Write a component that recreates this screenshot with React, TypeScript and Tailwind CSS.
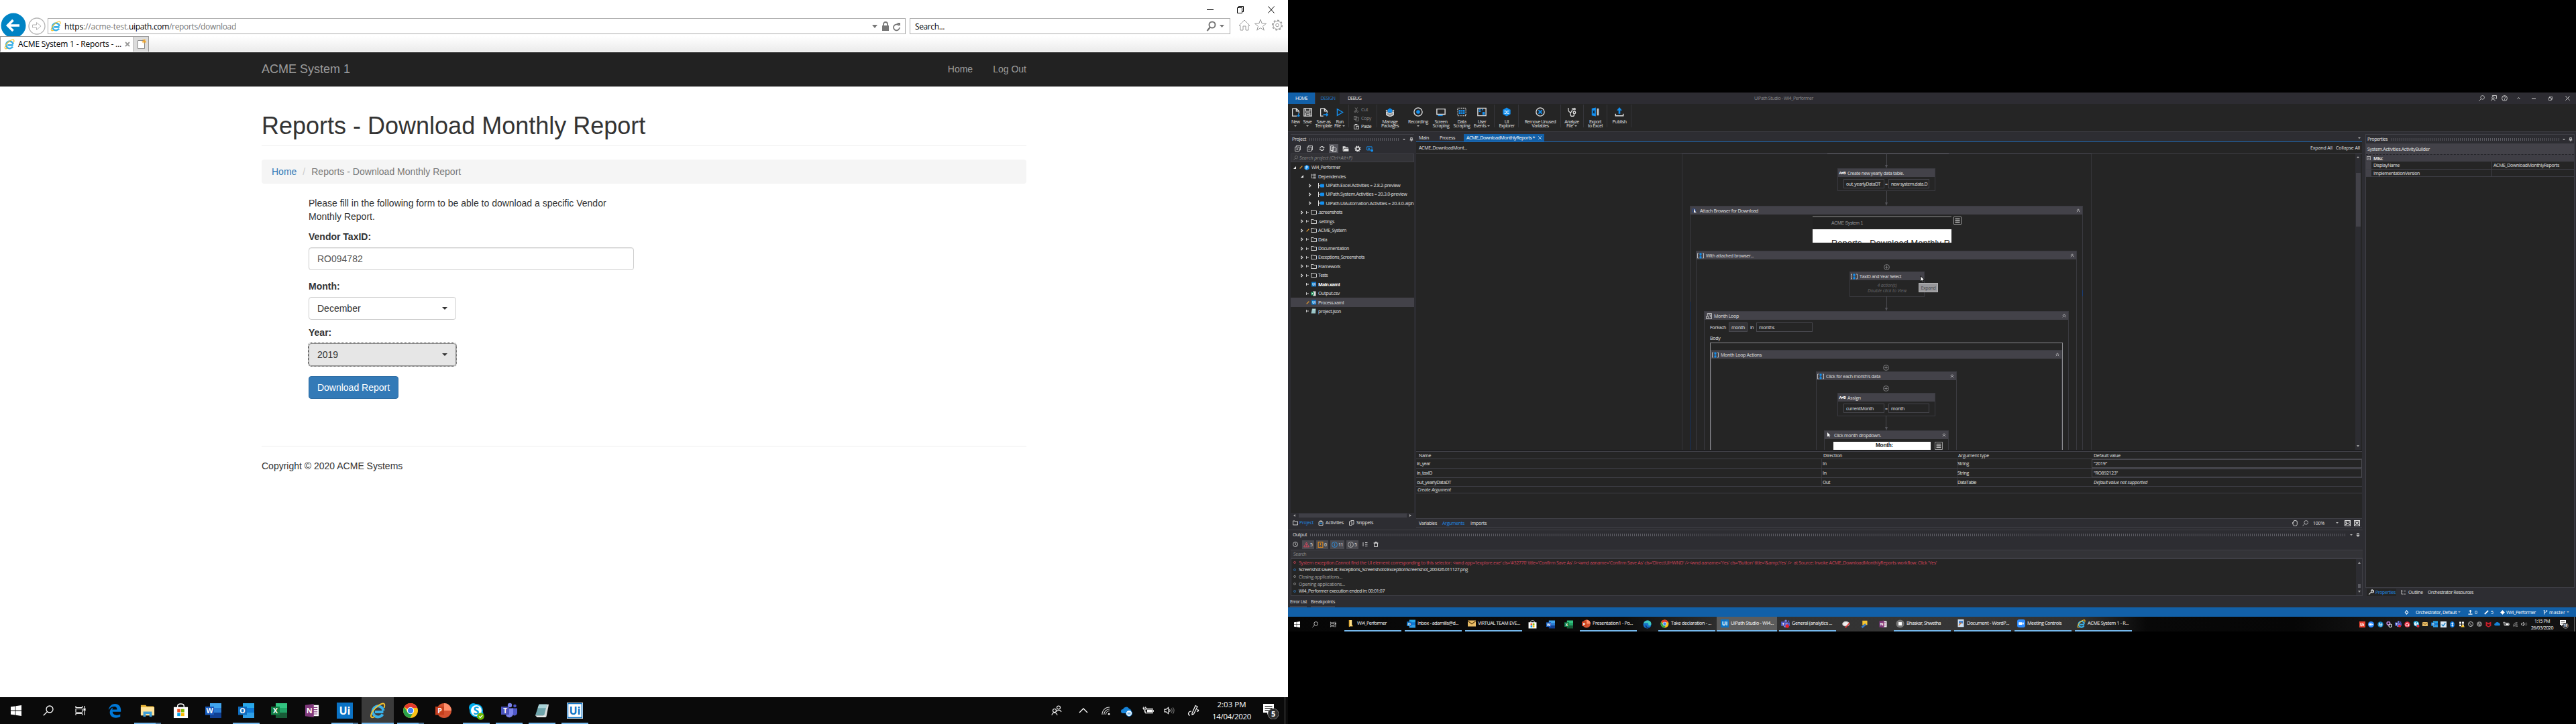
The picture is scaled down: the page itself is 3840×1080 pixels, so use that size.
import { useLayoutEffect, useRef, useState, type ReactNode } from "react";
import clsx from "clsx";

/* ---------- shared text helper: spreads a label over a known width ---------- */
function T({ w, children, className }: { w: number; children: string; className?: string }) {
  const ref = useRef<HTMLSpanElement>(null);
  const [spacing, setSpacing] = useState(0);
  useLayoutEffect(() => {
    if (ref.current) {
      const natural = ref.current.getBoundingClientRect().width;
      setSpacing((w - natural) / children.length);
    }
  }, [w, children]);
  return (
    <span className={clsx("block shrink-0 whitespace-pre", className)} style={{ width: w, letterSpacing: spacing }}>
      <span ref={ref}>{children}</span>
    </span>
  );
}

/* ---------- application icons ---------- */
type IconProps = { className?: string };

const WinLogo = ({ className }: IconProps) => (
  <svg viewBox="0 0 16 16" className={className} fill="#fff">
    <path d="M0 2.3 6.6 1.4V7.6H0zM7.4 1.3 16 0v7.6H7.4zM0 8.4h6.6v6.2L0 13.7zM7.4 8.4H16V16l-8.6-1.3z" />
  </svg>
);
const Magnifier = ({ className }: IconProps) => (
  <svg viewBox="0 0 16 16" className={className} fill="none" stroke="currentColor" strokeWidth="1.3">
    <circle cx="10" cy="6" r="5" />
    <path d="M6.4 9.6.8 15.3" />
  </svg>
);
const TaskView = ({ className }: IconProps) => (
  <svg viewBox="0 0 16 16" className={className} fill="none" stroke="#fff" strokeWidth="1.1">
    <path d="M1 1v2.5h9.5V1M1 15v-2.5h9.5V15M1 5.5h9.5v5H1zM14 1v3M14 9v6" />
    <path d="M13 5h2v2.6h-2z" fill="#fff" />
  </svg>
);
const EdgeOld = ({ className }: IconProps) => (
  <svg viewBox="0 0 24 24" className={className}>
    <path fill="#0078d7" d="M2 11C3 4.500 7.500 1 12.500 1 19 1 22 6 22 11v3H8.500c.3 4.200 4 5.500 7 5.500 2.200 0 4-.6 5.500-1.500v4.200c-2 1-4.300 1.500-7 1.500-6 0-10-3.500-10-9 0-3.500 2-6.700 5.500-8-1 1.200-1.300 2.500-1.400 3.700h7.700c0-3-1.300-5-4.600-5C7.500 5.400 4 7.500 2 11z" />
  </svg>
);
const EdgeNew = ({ className }: IconProps) => (
  <svg viewBox="0 0 24 24" className={className}>
    <circle cx="12" cy="12" r="11" fill="#1672c9" />
    <path fill="#3fc8c0" d="M2 9C4 3 9 1 13 1c6 0 10 4 10 9 0 3-2 5-5 5-2 0-3-1-3-2 1-1 1-5-4-5-4 0-8 1-9 1z" />
    <path fill="#0b3f7d" d="M9 12c0 5 4 8 8 8 2 0 4-1 4-1-2 3-6 4-9 4-4-1-7-7-3-11z" />
  </svg>
);
const Folder = ({ className }: IconProps) => (
  <svg viewBox="0 0 24 24" className={className}>
    <path fill="#e9b63a" d="M1 3h8l1.500 2H22v14H1z" />
    <path fill="#ffe49b" d="M1 6.500h22V20H1z" />
    <path fill="#3f9fd9" d="M5 22v-8.500h14V22h-4v-4.500H9V22z" />
  </svg>
);
const PlainFolder = ({ className }: IconProps) => (
  <svg viewBox="0 0 12 16" className={className}>
    <path fill="#ffe08a" d="M1 0h7v15H1z" />
    <path fill="#e0a92e" d="M1 0h2v16H1zM8 11h2v4H8z" />
  </svg>
);
const Store = ({ className }: IconProps) => (
  <svg viewBox="0 0 24 24" className={className}>
    <path d="M7 8V4.500C7 2.500 9 1 12 1s5 1.500 5 3.500V8" fill="none" stroke="#fff" strokeWidth="1.500" />
    <path fill="#fff" d="M1 6h22v17H1z" />
    <path fill="#f25022" d="M6.500 9h5v5h-5z" />
    <path fill="#7fba00" d="M12.500 9h5v5h-5z" />
    <path fill="#00a4ef" d="M6.500 15h5v5h-5z" />
    <path fill="#ffb900" d="M12.500 15h5v5h-5z" />
  </svg>
);
function Office({ className, letter, tones }: IconProps & { letter: string; tones: [string, string, string, string] }) {
  return (
    <svg viewBox="0 0 24 24" className={className}>
      <path fill={tones[0]} d="M7 1h17v8H7z" />
      <path fill={tones[1]} d="M7 8h17v8H7z" />
      <path fill={tones[2]} d="M7 15h17v8H7z" />
      <path fill={tones[3]} d="M0 6h13v12.500H0z" />
      <text x="6.500" y="16" textAnchor="middle" fontSize="10.500" fontWeight="700" fill="#fff" fontFamily="Open Sans, sans-serif">
        {letter}
      </text>
    </svg>
  );
}
const Word = (p: IconProps) => <Office {...p} letter="W" tones={["#41a5ee", "#2b7cd3", "#103f91", "#185abd"]} />;
const Excel = (p: IconProps) => <Office {...p} letter="X" tones={["#33c481", "#21a366", "#185c37", "#107c41"]} />;
const Outlook = (p: IconProps) => <Office {...p} letter="O" tones={["#28a8ea", "#0f78d4", "#2f9fe8", "#0f6cbd"]} />;
const PowerPoint = ({ className }: IconProps) => (
  <svg viewBox="0 0 24 24" className={className}>
    <circle cx="13" cy="12" r="11" fill="#d35230" />
    <path d="M13 1a11 11 0 0 1 11 11H13z" fill="#ff8f6b" />
    <path fill="#c43e1c" d="M0 6h13v12.500H0z" />
    <text x="6.500" y="16" textAnchor="middle" fontSize="10.500" fontWeight="700" fill="#fff" fontFamily="Open Sans, sans-serif">P</text>
  </svg>
);
const OneNote = ({ className }: IconProps) => (
  <svg viewBox="0 0 24 24" className={className}>
    <path fill="#fff" d="M12 3h11v18H12z" />
    <path d="M14 7h7M14 10.500h7M14 14h7M14 17.500h7" stroke="#80397b" strokeWidth="1.200" />
    <path fill="#80397b" d="M1 3 15 1v22L1 21z" />
    <text x="8" y="16.500" textAnchor="middle" fontSize="12" fontWeight="700" fill="#fff" fontFamily="Open Sans, sans-serif">N</text>
  </svg>
);
function UiTile({ className, inverse }: IconProps & { inverse?: boolean }) {
  return (
    <svg viewBox="0 0 24 24" className={className}>
      <path fill={inverse ? "#fff" : "#0b72c4"} d="M0 0h24v24H0z" />
      {inverse && <path d="M1.500 1.500h21v21h-21z" fill="none" stroke="#0b72c4" strokeWidth="1.500" />}
      <text x="12" y="18" textAnchor="middle" fontSize="16" fontWeight="700" fill={inverse ? "#0b72c4" : "#fff"} fontFamily="Open Sans, sans-serif">Ui</text>
    </svg>
  );
}
const InternetExplorer = ({ className }: IconProps) => (
  <svg viewBox="0 0 24 24" className={className}>
    <path d="M20.500 14H8M19.500 17.500A8 8 0 1 1 20.500 12" fill="none" stroke="#39b0e8" strokeWidth="4" />
    <path d="M21.500 8c1.500-4 1-7-2-6.500C14 2.500 3.500 11 2 19c-.6 3.500 2 4 5.500 2" fill="none" stroke="#f6c32c" strokeWidth="1.900" />
  </svg>
);
const Chrome = ({ className }: IconProps) => (
  <svg viewBox="0 0 24 24" className={className}>
    <circle cx="12" cy="12" r="11" fill="#fbc116" />
    <path d="M12 12 2.500 6.500A11 11 0 0 1 21.500 6.500L22 8H12z" fill="#e33b2e" />
    <path d="M2.500 6.500A11 11 0 0 0 11.500 23L16 14.500 12 17 7.500 14.500z" fill="#2ba24c" />
    <circle cx="12" cy="12" r="5.200" fill="#fff" />
    <circle cx="12" cy="12" r="4.200" fill="#4285f4" />
  </svg>
);
function Skype({ className, busy }: IconProps & { busy?: boolean }) {
  return (
    <svg viewBox="0 0 24 26" className={className}>
      <circle cx="7.500" cy="7.500" r="6.500" fill="#00aff0" />
      <circle cx="16" cy="17" r="6.500" fill="#00aff0" />
      <circle cx="12" cy="12" r="10" fill="#00aff0" />
      <circle cx="12" cy="12" r="8" fill="#fff" />
      <text x="12" y="18" textAnchor="middle" fontSize="16" fontWeight="700" fill="#0a9fe0" fontFamily="Open Sans, sans-serif">S</text>
      <circle cx="18.500" cy="20.500" r="5.300" fill={busy ? "#d92c3a" : "#6bb700"} />
      {!busy && <path d="m16 20.500 2 2 3.200-3.600" fill="none" stroke="#fff" strokeWidth="1.400" />}
    </svg>
  );
}
function Teams({ className, busy }: IconProps & { busy?: boolean }) {
  return (
    <svg viewBox="0 0 24 24" className={className}>
      <circle cx="13" cy="4" r="3.200" fill="#7b83eb" />
      <circle cx="20.500" cy="5" r="2.300" fill="#5059c9" />
      <path fill="#5059c9" d="M17 8.500h7V16a4 4 0 0 1-7 2z" />
      <path fill="#7b83eb" d="M7.500 8.500H18V17a6 6 0 0 1-10.500 3z" />
      <path fill="#4b53bc" d="M0 6h12v12H0z" />
      <text x="6" y="15.800" textAnchor="middle" fontSize="10.500" fontWeight="700" fill="#fff" fontFamily="Open Sans, sans-serif">T</text>
      {busy && <circle cx="17" cy="18.500" r="5" fill="#e0212c" />}
    </svg>
  );
}
const Notepad = ({ className }: IconProps) => (
  <svg viewBox="0 0 24 24" className={className}>
    <path fill="#d7dcdc" d="M8 2h15l-4 20-4 1z" />
    <path fill="#6fa4ab" d="M7 2h13l-4.500 18H1z" />
    <path fill="#a9d3d8" d="M7 2h13l-1.500 6H5z" />
    <path fill="#e9eeee" d="M1 20h15.500l2 3H4z" />
  </svg>
);
const Envelope = ({ className }: IconProps) => (
  <svg viewBox="0 0 16 16" className={className}>
    <path fill="#e8bc66" d="M0 2h16v12H0z" />
    <path d="m0 3 8 6 8-6" fill="none" stroke="#5a3d12" strokeWidth="1.400" />
  </svg>
);
const ZoomApp = ({ className }: IconProps) => (
  <svg viewBox="0 0 16 16" className={className}>
    <rect width="16" height="16" rx="4" fill="#2d8cff" />
    <path fill="#fff" d="M3 5.500h7v5H3zM10.500 7.500 13 5.800v4.400l-2.500-1.700z" />
  </svg>
);
const Wifi = ({ className }: IconProps) => (
  <svg viewBox="0 0 14 14" className={className} fill="none" stroke="#ddd" strokeWidth="1.100">
    <path d="M1 13C1 6 6 1 13 1M4 13c0-5 4-9 9-9M7 13c0-3.500 2.500-6 6-6" />
    <circle cx="12" cy="12" r="1.500" fill="#fff" stroke="none" />
  </svg>
);
const Cloud = ({ className }: IconProps) => (
  <svg viewBox="0 0 17 14" className={className}>
    <path fill="#1683d8" d="M3 11a3 3 0 0 1 0-6 5 5 0 0 1 9-1 4 4 0 0 1 2 7z" />
  </svg>
);
const Battery = ({ className }: IconProps) => (
  <svg viewBox="0 0 18 14" className={className} fill="none" stroke="#fff" strokeWidth="1.100">
    <path d="M6 4h10v7H5V8M17.200 6v3M2 1v2M5 1v2M1 3h5v2L4 6.500 2 5zM3.500 7v3" />
    <path d="M8 6h6.500v3H8z" fill="#fff" />
  </svg>
);
const Speaker = ({ className }: IconProps) => (
  <svg viewBox="0 0 18 14" className={className} fill="none" stroke="#fff" strokeWidth="1.100">
    <path d="M1 5h2.500L7 2v10L3.500 9H1zM9 5q1.500 2 0 4" />
    <path d="M11.500 3.500q3 3.500 0 7M14 2q4 5 0 10" stroke="#777" />
  </svg>
);

/* ---------- left monitor: browser ---------- */
function TitleBar() {
  return (
    <div className="flex h-[27px] items-center justify-end pr-[19px]">
      <svg viewBox="0 0 110 12" className="h-3 w-[110px]" fill="none" stroke="#000" strokeWidth="1">
        <path d="M8 6.500h10M53.500 3.500h7v8h-7zM55.500 3.500v-2h7v8h-2M99.500 1.500l9 10M108.500 1.500l-9 10" />
      </svg>
    </div>
  );
}

function AddressRow() {
  return (
    <div className="flex h-[27px] items-start font-['Open_Sans',sans-serif] text-xs">
      <div className="relative h-[27px] w-[71px] shrink-0">
        <svg viewBox="0 0 71 35" className="absolute -top-2 left-0 h-[35px] w-[71px]">
          <circle cx="20" cy="19" r="18.500" fill="#0083c4" />
          <path d="M29 19H12M19.500 11l-8 8 8 8" fill="none" stroke="#fff" strokeWidth="3.600" />
          <circle cx="55" cy="20" r="12" fill="#fff" stroke="#b4b4b4" strokeWidth="1.300" />
          <path d="M48.500 18h6v-3.500l6.500 5.500-6.500 5.500V22h-6z" fill="none" stroke="#b4b4b4" />
        </svg>
      </div>
      <div className="flex h-6 w-[1279px] shrink-0 items-center border border-[#ababab] pl-[3px] pr-1.5">
        <InternetExplorer className="size-4" />
        <span className="ml-[5px] flex pt-0.5 text-[#777]">
          <T w={28} className="text-black">https</T>
          <T w={68}>://acme-test.</T>
          <T w={60} className="text-black">uipath.com</T>
          <T w={100}>/reports/download</T>
        </span>
        <svg viewBox="0 0 46 16" className="ml-auto h-4 w-[46px]" fill="#777">
          <path d="M3 6h8l-4 5zM18 7h10v8H18z" />
          <path d="M20 8V5a3 3 0 0 1 6 0v3" fill="none" stroke="#777" strokeWidth="1.800" />
          <path d="M43 7a4.500 4.500 0 1 0 1 3" fill="none" stroke="#777" strokeWidth="1.800" />
          <path d="M39.500 3H45v5z" />
        </svg>
      </div>
      <div className="ml-1.5 flex h-6 w-[478px] shrink-0 items-center border border-[#ababab] px-[7px]">
        <T w={44} className="pt-0.5 text-black">Search...</T>
        <svg viewBox="0 0 28 16" className="ml-auto h-4 w-7" fill="none" stroke="#777">
          <circle cx="9" cy="6" r="4.500" strokeWidth="2" />
          <path d="M6 9.500 1.500 15" strokeWidth="2.300" />
          <path d="M20 6h7l-3.500 4z" fill="#777" stroke="none" />
        </svg>
      </div>
      <svg viewBox="0 0 68 20" className="ml-3 h-5 w-[68px]" fill="none" stroke="#9b9b9b" strokeWidth="1">
        <path d="M1 11 9 3l8 8h-2v7h-4v-6H7v6H3v-7z" />
        <path d="m33 2 2.200 6 6.300.2-5 4 1.800 6-5.300-3.600-5.300 3.600 1.800-6-5-4 6.300-.2z" />
        <circle cx="58" cy="10.500" r="6" />
        <circle cx="58" cy="10.500" r="7.300" strokeWidth="1.600" strokeDasharray="2.900 2.800" />
        <circle cx="58" cy="10.500" r="2.300" />
      </svg>
    </div>
  );
}

function TabStrip() {
  return (
    <div className="flex h-6 border-b border-white bg-gradient-to-b from-white to-[#ebebeb] font-['Open_Sans',sans-serif] text-xs">
      <div className="flex h-[23px] w-[200px] items-center border border-b-0 border-[#999] bg-white pl-[5px]">
        <InternetExplorer className="size-4" />
        <T w={154} className="ml-[5px] text-black">ACME System 1 - Reports - ...</T>
        <svg viewBox="0 0 8 8" className="ml-[5px] size-2" stroke="#999" strokeWidth="1.800">
          <path d="m1 1 6 6M7 1 1 7" />
        </svg>
      </div>
      <div className="flex h-[23px] w-[22px] items-center justify-center border border-b-0 border-l-0 border-[#999] bg-[#dcdcdc]">
        <svg viewBox="0 0 14 16" className="h-4 w-3.5">
          <path d="M1.500 2.500h10v12h-10z" fill="#fff" stroke="#888" />
          <path d="M11 0v7M7.500 3.500h7M8.500 1l5 5M13.500 1l-5 5" stroke="#f5a623" />
        </svg>
      </div>
    </div>
  );
}

function Select({ value, focused }: { value: string; focused?: boolean }) {
  return (
    <div
      className={clsx(
        "flex h-[34px] w-[220px] items-center justify-between rounded border px-3",
        focused ? "border-[#8c8c8c] bg-[#e6e6e6] outline-1 outline-dotted outline-[#333]" : "border-[#ccc] bg-white",
      )}
    >
      <span>{value}</span>
      <span className="border-x-4 border-t-4 border-x-transparent border-t-[#333]" />
    </div>
  );
}

function WebPage() {
  return (
    <div className="flex-1 bg-white font-['Liberation_Sans',sans-serif] text-sm leading-5 text-[#333]">
      <nav className="flex h-[51px] items-center border-b border-[#080808] bg-[#222] pl-[390px] pr-[390px] text-[#9d9d9d]">
        <span className="text-lg leading-5">ACME System 1</span>
        <span className="ml-auto">Home</span>
        <span className="ml-[30px]">Log Out</span>
      </nav>
      <main className="mx-auto w-[1140px]">
        <h1 className="mt-[39px] h-[50px] border-b border-[#eee] text-[36px] leading-[40px]">Reports - Download Monthly Report</h1>
        <div className="mt-5 flex h-9 items-center rounded bg-[#f5f5f5] px-[15px] text-[#777]">
          <a className="text-[#337ab7]">Home</a>
          <span className="px-[9px] text-[#ccc]">/</span>
          <T w={223}>Reports - Download Monthly Report</T>
        </div>
        <form className="ml-[70px] mt-[19px] w-[485px]">
          <p>Please fill in the following form to be able to download a specific Vendor<br />Monthly Report.</p>
          <label className="mt-[10px] block font-bold">Vendor TaxID:</label>
          <div className="mt-[6px] flex h-[34px] items-center rounded border border-[#ccc] px-3 text-[#555] shadow-[inset_0_1px_1px_rgba(0,0,0,.075)]">RO094782</div>
          <label className="mb-[6px] mt-[14px] block font-bold">Month:</label>
          <Select value="December" />
          <label className="mb-[6px] mt-[9px] block font-bold">Year:</label>
          <Select value="2019" focused />
          <div className="mt-[15px] flex h-[34px] w-[134px] items-center justify-center rounded border border-[#2e6da4] bg-[#337ab7] text-white">Download Report</div>
        </form>
        <footer className="mt-[70px] border-t border-[#eee] pt-[19px]">Copyright © 2020 ACME Systems</footer>
      </main>
    </div>
  );
}

type LeftApp = { icon: ReactNode; state?: "open" | "stack" | "active" };
const leftApps: LeftApp[] = [
  { icon: <EdgeOld className="size-[22px]" /> },
  { icon: <Folder className="size-[22px]" />, state: "stack" },
  { icon: <Store className="size-[23px]" /> },
  { icon: <Word className="size-6" /> },
  { icon: <Outlook className="size-6" />, state: "open" },
  { icon: <Excel className="size-6" /> },
  { icon: <OneNote className="size-[22px]" /> },
  { icon: <UiTile className="size-6" />, state: "stack" },
  { icon: <InternetExplorer className="size-6" />, state: "active" },
  { icon: <Chrome className="size-6" />, state: "stack" },
  { icon: <PowerPoint className="size-6" /> },
  { icon: <Skype className="mt-0.5 size-[26px]" />, state: "open" },
  { icon: <Teams className="size-6" />, state: "open" },
  { icon: <Notepad className="size-[22px]" />, state: "open" },
  { icon: <UiTile className="size-6" inverse />, state: "open" },
];

function LeftTaskbar() {
  return (
    <div className="flex h-10 bg-[#0a0a0a] font-['Open_Sans',sans-serif] text-xs text-white">
      <div className="flex w-12 items-center justify-center"><WinLogo className="size-4" /></div>
      <div className="flex w-12 items-center justify-center"><Magnifier className="size-4" /></div>
      <div className="mr-[3px] flex w-12 items-center justify-center"><TaskView className="size-4" /></div>
      {leftApps.map((app, i) => (
        <div key={i} className={clsx("mr-px flex w-12 flex-col items-center", app.state === "active" && "bg-[#3b3b3b]")}>
          <div className="flex h-[38px] items-center pt-0.5">{app.icon}</div>
          {app.state === "active" && <div className="h-0.5 w-12 bg-[#76b9ed]" />}
          {app.state === "open" && <div className="h-0.5 w-10 bg-[#76b9ed]" />}
          {app.state === "stack" && (
            <div className="flex h-0.5 w-10">
              <div className="w-8 bg-[#76b9ed]" />
              <div className="w-2 bg-[#4b7396]" />
            </div>
          )}
        </div>
      ))}
      <div className="ml-auto flex items-center">
        <svg viewBox="0 0 16 16" className="size-4" fill="none" stroke="#fff" strokeWidth="1.100">
          <circle cx="11" cy="3.500" r="2.500" /><path d="M8 9.500c1-3 6-3 7 .5" />
          <circle cx="5" cy="8" r="2.500" /><path d="M1 15c.5-5 7-5 8 0" />
        </svg>
        <svg viewBox="0 0 14 8" className="ml-[25px] h-2 w-3.5" fill="none" stroke="#fff" strokeWidth="1.300"><path d="m1 7 6-6 6 6" /></svg>
        <Wifi className="ml-5 size-[13px]" />
        <div className="relative ml-4">
          <Cloud className="h-3.5 w-[17px]" />
          <svg viewBox="0 0 10 10" className="absolute -bottom-0.5 right-0 size-2.5">
            <circle cx="5" cy="5" r="4.500" fill="#fff" stroke="#1683d8" />
            <path d="M2.500 4.500h5M7.500 6h-5" stroke="#1683d8" />
          </svg>
        </div>
        <Battery className="ml-[15px] h-3.5 w-[17px]" />
        <Speaker className="ml-[15px] h-3.5 w-[17px]" />
        <svg viewBox="0 0 18 18" className="ml-[18px] size-[18px]" fill="none" stroke="#fff" strokeWidth="1.200">
          <path d="M7 13 12 1.500l3 1.500L9.500 14 7 15zM6 10c-5 0-6 6-2 6M14 8c4-1 3 3 0 2" />
        </svg>
        <div className="ml-[19px] flex w-[58px] flex-col items-center text-[11.500px] leading-[18px]">
          <T w={43}>2:03 PM</T>
          <T w={58}>14/04/2020</T>
        </div>
        <div className="relative ml-[17px] h-[26px] w-6">
          <svg viewBox="0 0 24 26" className="h-[26px] w-6">
            <path fill="#fff" d="M1 3h16v13h-7l-3 3v-3H1z" />
            <path d="M3.500 6.500h11M3.500 9.500h11M3.500 12.500h6" stroke="#111" />
            <circle cx="16" cy="18" r="8" fill="#2d2d2d" stroke="#777" />
          </svg>
          <span className="absolute left-[13px] top-[10px] text-[11px] font-bold leading-4">5</span>
        </div>
        <div className="ml-[9px] mr-1 h-10 w-px bg-[#555]" />
      </div>
    </div>
  );
}

/* ---------- right monitor: studio ---------- */
const S = ({ children, box = "0 0 16 16", className }: { children: ReactNode; box?: string; className?: string }) => (
  <svg viewBox={box} className={clsx("shrink-0", className)} fill="none" stroke="currentColor" strokeWidth="1.500">
    {children}
  </svg>
);
const Pin = ({ className }: IconProps) => (
  <S className={clsx("size-[6px]", className)} box="0 0 8 10"><path d="M2 .5h4V6H2zM0 6.500h8M4 6.500V10" /></S>
);
const Caret = ({ className }: IconProps) => (
  <span className={clsx("shrink-0 border-x-2 border-t-2 border-x-transparent border-t-[#bbb]", className)} />
);
const Grip = ({ className }: IconProps) => (
  <span className={clsx("h-[4px] bg-[radial-gradient(circle,#5c5c63_0.5px,transparent_0.8px)] bg-[length:3px_2px]", className)} />
);

function StudioTitle() {
  return (
    <div className="flex h-[17px] shrink-0 bg-[#2d2c32]">
      <div className="flex w-10 items-center justify-center bg-[#1260a8] text-white"><T w={18}>HOME</T></div>
      <div className="ml-0.5 flex w-[35px] items-center justify-center bg-[#252525] text-[#1f78c8]"><T w={22}>DESIGN</T></div>
      <div className="ml-3 flex items-center"><T w={20}>DEBUG</T></div>
      <div className="ml-[586px] flex items-center text-[#8a8a8a]"><T w={88}>UiPath Studio - WI4_Performer</T></div>
      <div className="ml-auto mr-[9px] flex items-center">
        <Magnifier className="size-[9px]" />
        <S className="ml-[9px] size-[9px]"><circle cx="6" cy="7" r="3" /><path d="M1 15c1-6 9-6 10 0M4 3V1h11v8h-3" /></S>
        <S className="ml-[7px] size-[9px]"><circle cx="8" cy="8" r="7" /><path d="M6 6c0-3 4-3 4 0 0 1.500-2 1.500-2 3.500M8 11v2" /></S>
        <S className="ml-[14px] size-[5px]"><path d="m2 11 6-6 6 6" strokeWidth="3" /></S>
        <S className="ml-[17px] size-[6px]"><path d="M0 8h16" strokeWidth="2.500" /></S>
        <S className="ml-[19px] size-[6px]"><path d="M1 5h10v10H1zM4 5V1h11v10h-4" strokeWidth="2" /></S>
        <S className="ml-[19px] size-[7px]"><path d="m1 1 14 14M15 1 1 15" strokeWidth="2.200" /></S>
      </div>
    </div>
  );
}

function RibbonButton({ icon, lines, caret, className }: { icon: ReactNode; lines: [string, number][]; caret?: "below" | "side"; className: string }) {
  return (
    <div className={clsx("flex shrink-0 flex-col items-center", className)}>
      <div className="flex h-[22px] items-center">{icon}</div>
      {lines.map(([text, w], i) => (
        <div key={text} className="flex h-[6.500px] items-center">
          <T w={w}>{text}</T>
          {caret === "side" && i === lines.length - 1 && <Caret className="ml-0.5" />}
        </div>
      ))}
      {caret === "below" && <Caret className="mt-0.5" />}
    </div>
  );
}
const Sep = ({ className }: IconProps) => <div className={clsx("h-[34px] w-px shrink-0 bg-[#35353a]", className)} />;

function Ribbon() {
  const blue = "#1490f0";
  return (
    <div className="flex h-[42px] shrink-0 items-start border-b border-[#3f3f46] bg-[#252525] pt-[1px]">
      <RibbonButton className="ml-px w-5" lines={[["New", 12]]} caret="below" icon={<S className="size-[13px]"><path d="M2 1h7l5 5v4M2 1v14h8M9 1v5h5" /><path d="M13 10v6M10.500 13.500l2.500 2.500 2.500-2.500" stroke={blue} /></S>} />
      <RibbonButton className="w-4" lines={[["Save", 13]]} caret="below" icon={<S className="size-[13px]"><path d="M1 1h14v14H1zM4 1v5h8V1M4 15V9h8v6M5.500 11.500h5" strokeWidth="1.600" /></S>} />
      <RibbonButton className="w-8" lines={[["Save as", 21], ["Template", 25]]} icon={<S className="size-[13px]"><path d="M2 1h7l5 5v3M2 1v14h5M9 1v5h5" /><path d="M7 12.500h8M12.500 10l2.500 2.500-2.500 2.500" stroke={blue} strokeWidth="2" /></S>} />
      <RibbonButton className="w-4" lines={[["Run", 11], ["File", 10]]} caret="side" icon={<S className="size-[13px]"><path d="M3 2v12l10-6z" stroke={blue} strokeWidth="1.700" /></S>} />
      <Sep className="ml-[5px]" />
      <div className="ml-[7px] flex w-[30px] flex-col">
        <div className="flex h-[15px] items-center text-[#8a8a8a]"><S className="mr-[3px] size-2"><path d="M4 1l6 10M11 1 5 11" /><circle cx="4" cy="13" r="2" /><circle cx="11" cy="13" r="2" /></S><T w={10}>Cut</T></div>
        <div className="flex h-[11px] items-center text-[#8a8a8a]"><S className="mr-[3px] size-2"><path d="M1 1h7v10H1zM6 4h8v11H6z" /></S><T w={15}>Copy</T></div>
        <div className="flex h-[13px] items-center"><S className="mr-[3px] size-2"><path d="M6 15H1V3h12v3M4 3V1h6v2M7 7h8v8H7z" strokeWidth="1.700" /></S><T w={15}>Paste</T></div>
      </div>
      <Sep className="ml-[4px]" />
      <RibbonButton className="ml-[2px] w-[34px]" lines={[["Manage", 23], ["Packages", 26]]} icon={<S className="size-[14px]"><path d="M2 8l6 3 6-3v5l-6 3-6-3zM1 5l4 2M15 5l-4 2" fill="#999" /><path d="M5 4h6v4H5zM8 1v3" fill={blue} stroke={blue} /></S>} />
      <RibbonButton className="ml-[10px] w-[30px]" lines={[["Recording", 30]]} caret="below" icon={<S className="size-[14px]"><circle cx="8" cy="8" r="7" strokeWidth="1.500" /><circle cx="8" cy="8" r="3.200" fill={blue} stroke="none" /></S>} />
      <RibbonButton className="ml-[3px] w-8" lines={[["Screen", 19], ["Scraping", 25]]} icon={<S className="size-[14px]"><path d="M1 3h14v9H1z" strokeWidth="1.600" /><path d="M3 14h8" stroke={blue} strokeWidth="2" /></S>} />
      <RibbonButton className="w-[30px]" lines={[["Data", 13], ["Scraping", 25]]} icon={<S className="size-[14px]"><path d="M1 1.500h14v13H1z" strokeDasharray="1.500 1.500" /><path d="M3 4.500h10v7H3z" fill={blue} stroke="none" /><path d="M3 8h10M6.500 4.500v7M9.500 4.500v7" stroke="#252525" strokeWidth=".8" /></S>} />
      <RibbonButton className="w-[30px]" lines={[["User", 12.5], ["Events", 18.5]]} caret="side" icon={<S className="size-[14px]"><path d="M1 1.500h14v13H1z" strokeWidth="1.500" /><path d="M3 4h3M8 4h2M3 7h3" stroke={blue} strokeWidth="2" /><path d="M9 8h4v5H9z" fill={blue} stroke="none" /></S>} />
      <Sep className="ml-[3px]" />
      <RibbonButton className="ml-[4px] w-7" lines={[["UI", 6.5], ["Explorer", 23]]} icon={<S className="size-[14px]"><path d="m8 .5 6.500 3.700v7.600L8 15.500l-6.500-3.700V4.200z" fill={blue} stroke="none" /><path d="M4 6.500h3M9 6.500h3M8 6.500v4M4 10.500h3M9 10.500h3" stroke="#fff" /></S>} />
      <Sep className="ml-[3px]" />
      <RibbonButton className="ml-[4px] w-14" lines={[["Remove Unused", 46.5], ["Variables", 25]]} icon={<S className="size-[14px]"><circle cx="8" cy="8" r="7" strokeWidth="1.500" /><path d="m5 5 6 6M11 5l-6 6" stroke={blue} strokeWidth="2.400" /></S>} />
      <Sep className="ml-[2px]" />
      <RibbonButton className="ml-[2px] w-7" lines={[["Analyze", 21.5], ["File", 10]]} caret="side" icon={<S className="size-[14px]"><path d="M2 1c0 6 1 7 4 8v4c0 3 6 3 6 0v-2M9 1c0 5-1 7-3 8" /><circle cx="12.500" cy="9" r="2" /><circle cx="12.500" cy="3" r="1.500" /></S>} />
      <Sep className="ml-[3px]" />
      <RibbonButton className="ml-[3px] w-7" lines={[["Export", 18], ["to Excel", 22]]} icon={<S className="size-[14px]"><path d="M2 2 9 .5v15L2 14z" fill={blue} stroke="none" /><path d="m4 5.500 3 5M7 5.500l-3 5" stroke="#123" /><path d="M11 2h3v12h-3z" fill="#ccc" stroke="none" /></S>} />
      <Sep className="ml-[3px]" />
      <RibbonButton className="ml-[4px] w-7" lines={[["Publish", 21]]} icon={<S className="size-[14px]"><path d="M8 0 3.500 5.500h3V11h3V5.500h3z" fill={blue} stroke="none" /><path d="M1.500 11v3.500h13V11" strokeWidth="1.700" /></S>} />
      <Sep className="ml-[3px]" />
    </div>
  );
}

type TreeRow = { label: string; w: number; kind: "root" | "deps" | "pkg" | "dir" | "ui" | "csv" | "json"; edited?: boolean; selected?: boolean; bold?: boolean };
const tree: TreeRow[] = [
  { label: "WI4_Performer", w: 43, kind: "root", edited: true },
  { label: "Dependencies", w: 41, kind: "deps" },
  { label: "UiPath.Excel.Activities = 2.8.2-preview", w: 111, kind: "pkg" },
  { label: "UiPath.System.Activities = 20.3.0-preview", w: 121, kind: "pkg" },
  { label: "UiPath.UIAutomation.Activities = 20.3.0-alph", w: 131, kind: "pkg" },
  { label: ".screenshots", w: 36, kind: "dir" },
  { label: ".settings", w: 24, kind: "dir" },
  { label: "ACME_System", w: 42, kind: "dir", edited: true },
  { label: "Data", w: 13, kind: "dir" },
  { label: "Documentation", w: 46, kind: "dir" },
  { label: "Exceptions_Screenshots", w: 69, kind: "dir" },
  { label: "Framework", w: 33, kind: "dir" },
  { label: "Tests", w: 14, kind: "dir" },
  { label: "Main.xaml", w: 32, kind: "ui", bold: true },
  { label: "Output.csv", w: 32, kind: "csv" },
  { label: "Process.xaml", w: 38, kind: "ui", edited: true, selected: true },
  { label: "project.json", w: 34, kind: "json" },
];
const Pencil = () => <S className="size-[5px]"><path d="M2 14 14 2" stroke="#f0a030" strokeWidth="4" /></S>;
const OpenArrow = () => <S className="size-[4px]" box="0 0 8 8"><path d="M8 0v8H0z" fill="#eee" stroke="none" /></S>;
const ClosedArrow = () => <S className="h-[6px] w-[4px]" box="0 0 8 12"><path d="M1.500 1.500v9l5-4.500z" strokeWidth="2" /></S>;

function TreeLine({ row }: { row: TreeRow }) {
  const bar = clsx("flex h-[13.430px] items-center", row.selected && "bg-[#434249]", row.bold && "font-bold text-white");
  if (row.kind === "root")
    return (
      <div className={bar}>
        <span className="ml-1 w-[9px]"><OpenArrow /></span><span className="w-[7px]"><Pencil /></span>
        <S className="mr-[3px] size-2"><path d="m8 0 7 4v8l-7 4-7-4V4z" fill="#1490f0" stroke="none" /><path d="M6 13V4h3q2 0 2 2.500T9 9H6" stroke="#fff" strokeWidth="1.800" /></S>
        <T w={row.w}>{row.label}</T>
      </div>
    );
  if (row.kind === "pkg")
    return (
      <div className={bar}>
        <span className="ml-[27px] w-[14px]"><ClosedArrow /></span>
        <S className="mr-[2.500px] h-2 w-[9px]" box="0 0 18 16"><path d="M1 0v16M1 8h6" strokeWidth="2" /><rect x="6" y="3" width="12" height="10" rx="2" fill="#1490f0" stroke="none" /></S>
        <T w={row.w}>{row.label}</T>
      </div>
    );
  return (
    <div className={bar}>
      <span className="ml-[15px] w-[8px]">{row.kind === "deps" ? <OpenArrow /> : row.kind === "dir" ? <ClosedArrow /> : null}</span>
      <span className="w-[7px]">
        {row.edited ? <Pencil /> : row.kind !== "deps" && <S className="size-[4px]" box="0 0 8 8"><path d="M1 0v8M1 4h7" strokeWidth="1.600" /></S>}
      </span>
      <span className="mr-[2.500px] flex w-[8.500px] justify-center">
        {row.kind === "deps" && <S className="size-2"><path d="M2 1v12h5M2 4h5" /><path d="M7 1h8v6H7zM7 9h8v6H7z" fill="#999" stroke="none" /></S>}
        {row.kind === "dir" && <S className="h-[7px] w-[9px]" box="0 0 18 14"><path d="M1 1h7l1 2h8v10H1z" strokeWidth="1.800" /></S>}
        {row.kind === "ui" && <UiTile className="h-2 w-[7px]" />}
        {row.kind === "csv" && <S className="size-2"><path d="M6 1h9v14H6z" fill="#ddd" stroke="none" /><path d="M0 3h9v10H0z" fill="#138a50" stroke="none" /><path d="m3 5.500 3 5M6 5.500l-3 5" stroke="#fff" /></S>}
        {row.kind === "json" && <S className="size-2"><path d="M4 1h11l-1 14H1z" fill="#9cc7c9" stroke="none" /><path d="M6 4h7" stroke="#e9f5f5" /></S>}
      </span>
      <T w={row.w}>{row.label}</T>
    </div>
  );
}

function ProjectPanel() {
  return (
    <div className="flex w-[188px] shrink-0 flex-col bg-[#2d2d32] pl-1">
      <div className="flex h-[14px] shrink-0 items-center border-t border-[#3f3f46] pl-0.5 text-[7.200px]">
        <T w={21}>Project</T><Grip className="ml-1 w-[135px]" /><Caret className="ml-[5px]" /><Pin className="ml-[6px]" />
      </div>
      <div className="flex h-[15px] shrink-0 items-center pl-[3px]">
        <span className="flex w-[18px] justify-center pr-1"><S className="size-[9px]"><path d="M4 4V1h11v11h-3M1 4h11v11H1zM4 9.500h5M6.500 7v5" /></S></span>
        <span className="flex w-[18px] justify-center pr-1"><S className="size-[9px]"><path d="M4 4V1h11v11h-3M1 4h11v11H1zM4 9.500h5" /></S></span>
        <span className="flex w-[18px] justify-center pr-1"><S className="size-[9px]"><path d="M3 8a5 5 0 0 1 9-3M13 8a5 5 0 0 1-9 3M10 5h5M1 11h5" strokeWidth="2" /></S></span>
        <span className="mr-1 flex h-[13px] w-[14px] items-center justify-center bg-[#55555c]"><S className="size-[10px]"><path d="M1 1h6v11H1zM5 4h6l3 3v8H5z" strokeWidth="1.500" /></S></span>
        <span className="flex w-[18px] justify-center pr-1"><S className="size-[10px]"><path d="M1 2h6l1 2h6v2H4L1 13zM5 7h10v7H1z" fill="currentColor" stroke="none" /></S></span>
        <span className="flex w-[18px] justify-center pr-1"><S className="size-[10px]"><circle cx="8" cy="8" r="4.200" strokeWidth="2.500" /><circle cx="8" cy="8" r="6.300" strokeWidth="2" strokeDasharray="2.500 2.450" /></S></span>
        <span className="flex w-[18px] justify-center pr-1"><S className="size-[10px]"><path d="M1 3h12v8H1z" stroke="#1490f0" /><path d="m3 9 3-4 3 4z" fill="#1490f0" stroke="none" /><circle cx="13" cy="12" r="3" fill="#1490f0" stroke="none" /></S></span>
      </div>
      <div className="flex h-[13px] w-[184px] shrink-0 items-center border border-[#3f3f46] bg-[#333337] pl-[3px] italic text-[#8a8a8a]">
        <Magnifier className="mr-[2px] size-[7px]" /><T w={79}>Search project (Ctrl+Alt+P)</T>
      </div>
      <div className="flex w-[184px] flex-1 flex-col bg-[#252525] pt-[1px]">
        {tree.map((row) => <TreeLine key={row.label} row={row} />)}
        <div className="mt-auto flex h-[7px] items-center justify-between bg-[#2d2d32] px-1">
          <span className="border-y-2 border-r-[3px] border-y-transparent border-r-[#aaa]" />
          <span className="h-[6px] w-[161px] bg-[#3f3f46]" />
          <span className="border-y-2 border-l-[3px] border-y-transparent border-l-[#aaa]" />
        </div>
      </div>
      <div className="flex h-[15px] shrink-0 items-center pl-[3px]">
        <S className="mr-0.5 size-[8px]"><path d="M1 2h5l1 2h8v10H1z" strokeWidth="1.800" /></S>
        <T w={21} className="text-[#1f86e0]">Project</T>
        <S className="ml-[7px] mr-[3px] size-[8px]"><path d="M2 5h12v10H2zM5 5V2h6v3" strokeWidth="1.700" /><path d="M4 9h8" stroke="#1490f0" strokeWidth="3" /></S>
        <T w={27}>Activities</T>
        <S className="ml-[8px] mr-[3px] size-[8px]"><path d="M1 4h7v11H1zM5 1h9v11H9" strokeWidth="1.700" /></S>
        <T w={25}>Snippets</T>
      </div>
    </div>
  );
}

/* ---------- workflow canvas ---------- */
const SequenceIcon = () => (
  <S className="h-[9px] w-[10px]" box="0 0 20 18"><path d="M4 2H1v14h3M16 2h3v14h-3" strokeWidth="1.500" /><path d="M7 1h6v6H7zM7 11h6v6H7zM9 7h2v4H9z" fill="#1490f0" stroke="none" /></S>
);
const AssignIcon = () => <span className="w-[9px] text-[6px] font-bold tracking-[-0.600px] text-white">A≠B</span>;
const Chevrons = () => <S className="mr-[3px] size-[6px]"><path d="m2 8 6-6 6 6M2 14l6-6 6 6" strokeWidth="1.800" /></S>;
const Burger = ({ className }: IconProps) => (
  <S className={clsx("size-3", className)} box="0 0 12 12"><path d="M.5.5h11v11H.5z" stroke="#999" strokeWidth="1" /><path d="M2.500 3.500h7M2.500 6h7M2.500 8.500h7" stroke="#bbb" strokeWidth="1.300" /></S>
);
const Plus = ({ className }: IconProps) => (
  <S className={clsx("absolute size-[9px] text-[#8c8c90]", className)}><circle cx="8" cy="8" r="7" /><path d="M4 8h8M8 4v8" /></S>
);
const Connector = ({ className }: IconProps) => (
  <div className={clsx("absolute flex w-[5px] flex-col items-center", className)}>
    <span className="w-px flex-1 bg-[#4a4a50]" />
    <span className="border-x-[2.500px] border-t-[5px] border-x-transparent border-t-[#55555b]" />
  </div>
);
function Node({ icon, title, w, collapsible, className, children }: { icon: ReactNode; title: string; w: number; collapsible?: boolean; className: string; children?: ReactNode }) {
  return (
    <div className={clsx("absolute border border-[#3a3a40] bg-[#252525]", className)}>
      <div className="flex h-[12px] items-center bg-[#434249] pl-px">
        <span className="mr-[3px] flex w-[10px] justify-center">{icon}</span>
        <T w={w}>{title}</T>
        {collapsible && <span className="ml-auto"><Chevrons /></span>}
      </div>
      {children}
    </div>
  );
}
const Field = ({ w, className, children }: { w: number; className: string; children: string }) => (
  <div className={clsx("flex h-[14px] items-center border border-[#46464c] pl-[3px]", className)}><T w={w}>{children}</T></div>
);
const Assignment = ({ left, right }: { left: [string, number]; right: [string, number] }) => (
  <div className="flex items-center gap-px pl-2 pt-[3px]">
    <Field w={left[1]} className="w-[61px]">{left[0]}</Field><span>=</span><Field w={right[1]} className="w-[61px]">{right[0]}</Field>
  </div>
);

function Canvas() {
  return (
    <div className="relative h-[442px] overflow-hidden bg-[#252525]">
      <div className="absolute left-[396px] top-0 h-[450px] w-[611px] border border-[#35353a]" />
      <div className="absolute left-[613px] top-0 h-px w-[181px] bg-[#55555b]" />
      <Connector className="left-[698.500px] top-0 h-[22px]" />
      <Node className="left-[628px] top-[22px] h-[34px] w-[146px]" icon={<AssignIcon />} title="Create new yearly data table." w={84}>
        <Assignment left={["out_yearlyDataDT", 51]} right={["new system.data.D", 54]} />
      </Node>
      <Connector className="left-[698.500px] top-[56px] h-[22px]" />

      <Node className="left-[408px] top-[78px] h-[400px] w-[586px]" icon={<S className="size-2"><circle cx="6" cy="8" r="5" stroke="#2a4fa0" strokeWidth="2" /><path d="M7 4v10l3-2 3 3" fill="#fff" stroke="#fff" /></S>} title="Attach Browser for Download" w={87} collapsible />
      <div className="absolute left-[408px] top-[221px] h-[221px] w-px bg-[#14305c]" />
      <div className="absolute left-[993px] top-[204px] h-[9px] w-px bg-[#1a3f7a]" />
      <div className="absolute left-[591px] top-[94px] h-[39px] w-[207px] overflow-hidden border-t border-[#999] bg-white font-['Liberation_Sans',sans-serif]">
        <div className="h-[18px] bg-[#222] pl-7 pt-[6px] text-[6.800px] text-[#999]"><T w={47}>ACME System 1</T></div>
        <div className="pl-7 pt-[14px] text-[12.700px] leading-[14px] text-[#222]"><T w={177}>Reports - Download Monthly R</T></div>
      </div>
      <Burger className="absolute left-[801px] top-[94px]" />

      <Node className="left-[417px] top-[145px] h-[400px] w-[568px]" icon={<SequenceIcon />} title="With attached browser..." w={71} collapsible />
      <Plus className="left-[696.500px] top-[165px]" />
      <Node className="left-[646px] top-[176px] h-[38px] w-[112px]" icon={<SequenceIcon />} title="TaxID and Year Select" w={62}>
        <div className="flex flex-col items-center gap-px pt-1 italic text-[#66666a]"><T w={29}>4 action(s)</T><T w={58}>Double click to View</T></div>
      </Node>
      <Connector className="left-[698.500px] top-[213px] h-[22px]" />

      <Node className="left-[429px] top-[235px] h-[400px] w-[544px]" icon={<S className="size-[9px]"><path d="M4 7V1h11v14H9M1 9h6v6H1zM7 5h5v6" strokeWidth="1.500" /></S>} title="Month Loop" w={37} collapsible>
        <div className="flex items-center pl-2 pt-1">
          <T w={24}>ForEach</T>
          <Field w={20} className="ml-1 w-7 bg-[#333337]">month</Field>
          <T w={5} className="mx-1">in</T>
          <Field w={23} className="w-[84px]">months</Field>
        </div>
        <T w={15.5} className="ml-2 mt-[6px]">Body</T>
      </Node>
      <div className="absolute left-[438px] top-[282px] h-[400px] w-[526px] border border-[#8c8c90]" />
      <Node className="left-[439px] top-[293px] h-[400px] w-[524px]" icon={<SequenceIcon />} title="Month Loop Actions" w={61} collapsible />
      <Plus className="left-[696px] top-[315px]" />
      <Node className="left-[596px] top-[325px] h-[400px] w-[210px]" icon={<SequenceIcon />} title="Click for each month's data" w={81} collapsible />
      <Plus className="left-[696px] top-[346px]" />
      <Node className="left-[628px] top-[357px] h-[35px] w-[146px]" icon={<AssignIcon />} title="Assign" w={20}>
        <Assignment left={["currentMonth", 41]} right={["month", 20]} />
      </Node>
      <Connector className="left-[698px] top-[391px] h-[22px]" />
      <Node className="left-[608px] top-[413px] h-[400px] w-[186px]" icon={<S className="size-2"><path d="M4 0v13l3-3 2 5 2-1-2-5h4z" fill="#fff" stroke="none" /></S>} title="Click month dropdown." w={70} collapsible>
        <div className="flex items-start pl-[13px] pt-[4px]">
          <div className="flex h-4 w-[145px] justify-center bg-white pl-[7px] pt-0.5 font-['Liberation_Sans',sans-serif] text-[8.200px] font-bold text-[#222]"><T w={26}>Month:</T></div>
          <Burger className="ml-[6px]" />
        </div>
      </Node>

      <div className="absolute left-[749px] top-[193px] flex h-[14px] w-[29px] items-center justify-center border border-[#b4b4b6] bg-[#98989b] text-[#48484c]"><T w={22}>Expand</T></div>
      <S className="absolute left-[751px] top-[182px] h-[11px] w-[8px]" box="0 0 12 18"><path d="M1 1v14l3.500-3 2.500 5 2-1-2.500-5H11z" fill="#fff" stroke="#000" /></S>

      <div className="absolute right-[2px] top-0 flex h-[442px] w-[8px] flex-col items-center bg-[#2d2d32]">
        <span className="mt-1 border-x-2 border-b-[3px] border-x-transparent border-b-[#999]" />
        <span className="mt-[22px] h-[80px] w-[7px] bg-[#434249]" />
        <span className="mb-1 mt-auto border-x-2 border-t-[3px] border-x-transparent border-t-[#999]" />
      </div>
    </div>
  );
}

const argumentRows: { name: [string, number]; dir: [string, number]; type: [string, number]; value: [string, number]; plain?: boolean }[] = [
  { name: ["in_year", 20], dir: ["In", 6], type: ["String", 17], value: ['"2019"', 20] },
  { name: ["in_taxID", 23], dir: ["In", 6], type: ["String", 17], value: ['"RO892123"', 36] },
  { name: ["out_yearlyDataDT", 51], dir: ["Out", 11], type: ["DataTable", 28], value: ["Default value not supported", 80], plain: true },
];

function Arguments() {
  return (
    <div className="flex h-[116px] flex-col border-t-2 border-[#1e1e20] bg-[#252525]">
      <div className="flex h-[12px] shrink-0 items-center border-b border-t border-[#3f3f46] pl-1">
        <T w={18} className="mr-[585px]">Name</T><T w={28} className="mr-[173px]">Direction</T><T w={46} className="mr-[156px]">Argument type</T><T w={40}>Default value</T>
      </div>
      {argumentRows.map((r) => (
        <div key={r.name[0]} className="flex h-[13.800px] shrink-0 items-stretch border-b border-[#3f3f46] pl-px leading-[13px]">
          <div className="w-[603px]"><T w={r.name[1]}>{r.name[0]}</T></div>
          <div className="w-[202px] border-l border-[#35353a] pl-px"><T w={r.dir[1]}>{r.dir[0]}</T></div>
          <div className="w-[201px] border-l border-[#35353a]"><T w={r.type[1]}>{r.type[0]}</T></div>
          <div className={clsx("flex flex-1 border pl-0.5 leading-[12px]", r.plain ? "border-transparent italic" : "border-[#4a4a50]")}><T w={r.value[1]}>{r.value[0]}</T></div>
        </div>
      ))}
      <div className="flex h-[10px] shrink-0 items-center border-b border-[#3f3f46] pl-0.5 italic"><T w={50}>Create Argument</T></div>
      <div className="mt-auto flex h-[14px] shrink-0 items-center border-y border-[#3f3f46] bg-[#2d2d32] pl-1">
        <T w={27}>Variables</T><T w={33} className="ml-[8px] text-[#1f86e0]">Arguments</T><T w={24} className="ml-[9px]">Imports</T>
        <S className="ml-auto size-[9px]"><path d="M4 15 1 9V6l2 2V3h2V1h6v2h2v8l-2 4z" /></S>
        <Magnifier className="ml-[6px] size-[9px]" />
        <T w={17} className="ml-[7px]">100%</T><Caret className="ml-[17px]" />
        <S className="ml-[9px] size-[9px]"><path d="M1 1h14v14H1zM1 5h4v6H1M11 5h4v6h-4M5 8h6" strokeWidth="2" /></S>
        <S className="ml-[5px] mr-[3px] size-[9px]"><path d="M1 1h14v14H1zM4 4l8 8M12 4l-8 8" strokeWidth="2" /></S>
      </div>
    </div>
  );
}

function Designer() {
  return (
    <div className="ml-[3px] w-[1410px] shrink-0">
      <div className="flex h-[12px] items-stretch border-b border-[#1f68b0] bg-[#2d2d32] pl-1 text-[7.200px]">
        <T w={15} className="self-center">Main</T>
        <T w={23} className="ml-4 self-center">Process</T>
        <div className="ml-[13px] flex w-[120px] items-center bg-[#1260a8] pl-1 text-white">
          <T w={102}>ACME_DownloadMonthlyReports *</T>
          <S className="ml-[5px] size-[5px]"><path d="m1 1 14 14M15 1 1 15" strokeWidth="2.500" /></S>
        </div>
        <Caret className="ml-auto mr-0.5 self-center" />
      </div>
      <div className="flex h-[17px] items-center border-b border-[#3f3f46] bg-[#252525] pl-1 pr-[3px]">
        <T w={72}>ACME_DownloadMont...</T>
        <T w={33} className="ml-auto">Expand All</T>
        <T w={36} className="ml-[5px]">Collapse All</T>
      </div>
      <Canvas />
      <Arguments />
    </div>
  );
}

const logRows: { text: string; w: number; tone: string; mark: string }[] = [
  { text: "System exception.Cannot find the UI element corresponding to this selector: <wnd app='iexplore.exe' cls='#32770' title='Confirm Save As' /><wnd aaname='Confirm Save As' cls='DirectUIHWND' /><wnd aaname='Yes' cls='Button' title='&amp;Yes' />  at Source: Invoke ACME_DownloadMonthlyReports workflow: Click 'Yes'", w: 951, tone: "text-[#d0445a]", mark: "text-[#d0445a]" },
  { text: "Screenshot saved at: Exceptions_Screenshots\\ExceptionScreenshot_200326.011127.png", w: 252, tone: "text-[#e0e0e0]", mark: "text-[#2b78c0]" },
  { text: "Closing applications...", w: 65, tone: "text-[#a8a8a8]", mark: "text-[#999]" },
  { text: "Opening applications...", w: 69, tone: "text-[#a8a8a8]", mark: "text-[#999]" },
  { text: "WI4_Performer execution ended in: 00:01:07", w: 128, tone: "text-[#e0e0e0]", mark: "text-[#2b78c0]" },
];

function Chip({ className, count, w, children }: { className: string; count: string; w: number; children: ReactNode }) {
  return <div className={clsx("mr-[3px] flex h-[13px] items-center justify-center gap-px bg-[#4a4a50]", className)}>{children}<T w={w}>{count}</T></div>;
}

function Output() {
  return (
    <div className="mt-[3px] flex h-[117px] shrink-0 flex-col border-t border-[#3f3f46] bg-[#2d2d32] pl-1">
      <div className="flex h-[13px] shrink-0 items-center pl-[3px] pr-1 text-[7.200px]">
        <T w={21}>Output</T><Grip className="ml-1 flex-1" /><Caret className="ml-1.5" /><Pin className="ml-[5px]" />
      </div>
      <div className="flex h-4 shrink-0 items-center pl-[3px]">
        <S className="mr-[6px] size-[8px]"><circle cx="8" cy="8" r="7" /><path d="M8 3v5l3 3" /></S>
        <Chip className="w-[18px]" count="5" w={4}><S className="size-[9px] text-[#e04860]"><path d="M8 2 1 14h14zM8 6v4M8 11v2" strokeWidth="1.600" /></S></Chip>
        <Chip className="w-[18px]" count="0" w={4}><S className="size-[9px] text-[#e08a1c]"><path d="M2 1h12v14H2zM8 4v5M8 11v2" strokeWidth="2" /></S></Chip>
        <Chip className="w-[21px]" count="11" w={7}><S className="size-[9px] text-[#2f8ee0]"><circle cx="8" cy="8" r="7" strokeWidth="1.600" /><path d="M8 7v5M8 4v2" strokeWidth="1.600" /></S></Chip>
        <Chip className="w-[18px]" count="5" w={4}><S className="size-[9px] text-[#bbb]"><circle cx="8" cy="8" r="7" strokeWidth="1.600" /><path d="M8 7v5M8 4v2" strokeWidth="1.600" /></S></Chip>
        <S className="ml-[3px] size-[8px]"><path d="M2 2v12M8 3h7M8 8h7M8 13h7" strokeWidth="1.800" /></S>
        <S className="ml-[8px] size-[8px]"><path d="M3 4h10v11H3zM1 4h14M6 4V1h4v3" strokeWidth="1.800" /></S>
      </div>
      <div className="flex h-[13px] w-[1598px] shrink-0 items-center border-y border-[#3f3f46] bg-[#333337] pl-1 text-[#8a8a8a]"><T w={19}>Search</T></div>
      <div className="flex h-[56px] w-[1598px] shrink-0 border border-[#3f3f46] bg-[#252525]">
        <div className="flex-1">
          {logRows.map((r) => (
            <div key={r.text} className="flex h-[10.600px] items-center pl-[3px]">
              <S className={clsx("mr-[4px] size-[4px]", r.mark)}><circle cx="8" cy="8" r="6" strokeWidth="3" /></S>
              <T w={r.w} className={r.tone}>{r.text}</T>
            </div>
          ))}
        </div>
        <div className="flex w-[9px] flex-col items-center bg-[#2d2d32] py-1">
          <span className="border-x-2 border-b-[3px] border-x-transparent border-b-[#999]" />
          <span className="mb-1 mt-auto h-1.5 w-1 bg-[#5a5a60]" />
          <span className="border-x-2 border-t-[3px] border-x-transparent border-t-[#999]" />
        </div>
      </div>
      <div className="-ml-px mt-[5px] flex gap-[6px]">
        <div className="border-b-[3px] border-[#434249] pb-[3px]"><T w={25}>Error List</T></div>
        <div className="border-b-[3px] border-[#434249] pb-[3px]"><T w={36}>Breakpoints</T></div>
      </div>
    </div>
  );
}

function Properties() {
  return (
    <div className="ml-[4px] flex w-[312px] shrink-0 flex-col">
      <div className="flex h-[677px] flex-col border border-[#3f3f46] bg-[#252525]">
        <div className="flex h-[13px] items-center bg-[#2d2d32] pl-0.5 text-[7.200px]">
          <T w={30}>Properties</T><Grip className="ml-[5px] w-[251px]" /><Caret className="ml-[5px]" /><Pin className="ml-[5px]" />
        </div>
        <div className="flex h-[16px] items-center bg-[#434249] pl-0.5"><T w={93}>System.Activities.ActivityBuilder</T></div>
        <div className="flex h-[11px] items-center border-t border-dashed border-[#25252a] bg-[#3f3e45] pl-px font-bold">
          <S className="mr-[4px] size-[6px]"><path d="M1 1h14v14H1zM4 8h8" strokeWidth="2" /></S><T w={14}>Misc</T>
        </div>
        {[["DisplayName", 39, "ACME_DownloadMonthlyReports", 98], ["ImplementationVersion", 69, "", 0]].map(([name, w, value, vw]) => (
          <div key={name} className="flex h-[11.500px] items-stretch border-b border-[#3f3f46] leading-[11px]">
            <div className="w-2 bg-[#434249]" />
            <div className="w-[180px] border-r border-[#3f3f46] pl-[3px]"><T w={Number(w)}>{String(name)}</T></div>
            <div className="pl-0.5">{value && <T w={Number(vw)}>{String(value)}</T>}</div>
          </div>
        ))}
      </div>
      <div className="flex h-[13px] items-center pl-0.5">
        <div className="flex h-[11px] w-[44px] items-center bg-[#252525]">
          <S className="mx-[2px] size-[9px]"><path d="M2 14 9 7M9 7a4 4 0 0 1 2-6v3l2 1 2-2a4 4 0 0 1-6 5z" strokeWidth="2" /></S><T w={30} className="text-[#1f86e0]">Properties</T>
        </div>
        <S className="ml-[7px] mr-[4px] size-[7px]"><path d="M2 0v14h6M2 4h4M10 4h6M10 14h6" strokeWidth="1.800" /></S>
        <T w={22}>Outline</T><T w={68} className="ml-[7px]">Orchestrator Resources</T>
      </div>
    </div>
  );
}

function StatusBar() {
  return (
    <div className="flex h-[14px] shrink-0 items-center bg-[#1260a8] pr-[10px] text-white">
      <S className="ml-auto mr-[10px] size-[7px]"><path d="m8 2 5 6-5 6-5-6z" strokeWidth="2.500" /></S>
      <T w={61}>Orchestrator, Default</T><Caret className="ml-[2px]" />
      <S className="ml-[11px] mr-[3px] size-[7px]"><path d="M8 11V1M4 5l4-4 4 4M1 14h14" strokeWidth="2.500" /></S><T w={5}>0</T>
      <S className="ml-[9px] mr-[3px] size-[7px]"><path d="M2 14 14 2" strokeWidth="4" /></S><T w={4}>5</T>
      <S className="ml-[10px] mr-[2px] size-[7px]"><path d="m8 1 7 7-7 7-7-7z" fill="#fff" /></S><T w={44}>WI4_Performer</T>
      <S className="ml-[11px] mr-[2px] size-[7px]"><path d="M4 15V2M12 3c0 5-8 4-8 8" strokeWidth="2" /><circle cx="4" cy="2" r="2" /><circle cx="12" cy="3" r="2" /></S>
      <T w={24}>master</T><Caret className="ml-[2px]" />
    </div>
  );
}

type RightApp = { icon: ReactNode; label?: string; w?: number; active?: boolean };
const rightApps: RightApp[] = [
  { icon: <WinLogo className="size-[9px]" /> },
  { icon: <Magnifier className="size-[9px]" /> },
  { icon: <TaskView className="size-[9px]" /> },
  { icon: <PlainFolder className="h-[10px] w-[8px]" />, label: "WI4_Performer", w: 44 },
  { icon: <Outlook className="size-[13px]" />, label: "Inbox - adamills@d...", w: 61 },
  { icon: <Envelope className="size-[12px]" />, label: "VIRTUAL TEAM EVE...", w: 63 },
  { icon: <Store className="size-[13px]" /> },
  { icon: <Word className="size-[13px]" /> },
  { icon: <Excel className="size-[13px]" /> },
  { icon: <PowerPoint className="size-[13px]" />, label: "Presentation1 - Po...", w: 60 },
  { icon: <EdgeNew className="size-[13px]" /> },
  { icon: <Chrome className="size-[13px]" />, label: "Take declaration - ...", w: 60 },
  { icon: <UiTile className="size-[12px]" />, label: "UiPath Studio - WI4...", w: 64, active: true },
  { icon: <Teams className="size-[13px]" busy />, label: "General (analytics ...", w: 60 },
  { icon: <S className="size-[13px]"><ellipse cx="7" cy="7" rx="6" ry="4" fill="#eee" stroke="#ccc" /><path d="M6 14 14 5" stroke="#d33" strokeWidth="2" /></S> },
  { icon: <S className="size-[13px]"><path d="M4 1h9v8H4z" fill="#f5c430" stroke="none" /><path d="M2 12 9 6l2 3-7 6z" fill="#3a78c0" stroke="none" /></S> },
  { icon: <OneNote className="size-[12px]" /> },
  { icon: <S className="size-[13px]"><circle cx="8" cy="8" r="7.500" fill="#777" stroke="none" /><path d="M5 5h6v6H5z" fill="#fff" stroke="none" /></S>, label: "Bhaskar, Shwetha", w: 51 },
  { icon: <S className="size-[12px]"><path d="M2 0h12v15H2z" fill="#cfe0f2" stroke="none" /><path d="M4 3h8v5H4z" fill="#3b7fd0" stroke="none" /><path d="M4 12 9 6" stroke="#d0702a" strokeWidth="2" /></S>, label: "Document - WordP...", w: 63 },
  { icon: <ZoomApp className="size-[12px]" />, label: "Meeting Controls", w: 51 },
  { icon: <InternetExplorer className="size-[13px]" />, label: "ACME System 1 - R...", w: 61 },
];

const tray: ReactNode[] = [
  <S className="h-[9px] w-[9px]"><path d="M0 0h16v16H0z" fill="#e8402f" stroke="none" /><path d="M3.500 4v6q0 2 2 2t2-2V4M11.500 7v5M11.500 4v1.500" stroke="#fff" strokeWidth="2" /></S>,
  <ZoomApp className="size-[9px] rounded-full" />,
  <S className="size-[9px]"><circle cx="8" cy="8" r="7.500" fill="#1487c8" stroke="none" /><path d="M5.500 3 4 12M5 7q3-1.500 2.500 1L7 11M10 6 9 14M10 6q3 0 2 2.500t-3 2" stroke="#fff" /></S>,
  <S className="size-[9px]"><circle cx="6" cy="5" r="4" stroke="#b57ad0" strokeWidth="3" /><circle cx="11" cy="11" r="4" stroke="#ddd" strokeWidth="2" /></S>,
  <Teams className="size-[10px]" busy />,
  <S className="size-[9px]"><circle cx="8" cy="8" r="7.500" fill="#e8283c" stroke="none" /><path d="m8 4 4 4v4H4V8z" stroke="#fff" strokeWidth="1.800" /></S>,
  <Skype className="size-[10px]" busy />,
  <Envelope className="size-[8px]" />,
  <Outlook className="size-[10px]" />,
  <S className="size-[9px]"><path d="M0 0h16v16H0z" fill="#dceaf5" stroke="none" /><path d="m3 8 4 4 6-8" stroke="#1780c8" strokeWidth="2.500" /></S>,
  <S className="size-[9px]"><ellipse cx="8" cy="8" rx="6" ry="8" fill="#0a78e0" stroke="none" /><path d="m5 5 6 6-3 2V3l3 2-6 6" stroke="#fff" /></S>,
  <S className="size-[9px]"><path d="M2 1h5v5H2zM9 1h5v5H9zM2 8h5v5H2zM9 8h5v5H9z" fill="#fff" stroke="none" /><path d="m11 7 5 8H6z" fill="#f5c430" stroke="none" /></S>,
  <S className="size-[8px]"><circle cx="8" cy="8" r="7" stroke="#bbb" strokeWidth="2" /><path d="m4 5 8 7" stroke="#bbb" strokeWidth="2" /></S>,
  <S className="size-[8px]"><circle cx="8" cy="8" r="7.500" fill="#888" stroke="none" /><path d="M9 3v5h4M5 12V9" stroke="#222" strokeWidth="1.800" /></S>,
  <S className="size-[9px]"><path d="m1 1 7 3 7-3v11l-7 3.500L1 12z" fill="#c81e2a" stroke="none" /><path d="M5 6v5l3 1.500 3-1.500V6L8 8z" fill="#2a0a0c" stroke="none" /></S>,
  <Cloud className="h-[8px] w-[10px]" />,
  <Battery className="h-[8px] w-[10px]" />,
  <Wifi className="size-[7px]" />,
  <Speaker className="h-[8px] w-[10px]" />,
];

function RightTaskbar() {
  return (
    <div className="flex h-[22px] shrink-0 bg-[linear-gradient(90deg,#060606_0,#0c0c0c_500px,#303030_650px,#363636_1000px,#303030_1180px,#080808_1280px,#060606_1500px,#1c1c1c_1700px,#101010_1920px)] text-white">
      {rightApps.map((app, i) =>
        app.label ? (
          <div key={i} className={clsx("flex w-[90px] shrink-0 flex-col", app.active ? "px-0" : "pl-[3px] pr-[2px]")}>
            <div className={clsx("flex h-5 items-center", app.active && "bg-[#5c5c5c] pl-[2px]")}>
              <span className="mr-[3px] flex w-4 justify-center pl-[3px]">{app.icon}</span>
              <T w={app.w ?? 60} className="text-[7.200px]">{app.label}</T>
            </div>
            <div className="h-[2px] bg-[#76b9ed]" />
          </div>
        ) : (
          <div key={i} className="flex w-[27px] shrink-0 items-center justify-center">{app.icon}</div>
        ),
      )}
      <div className="ml-auto flex items-center">
        {tray.map((icon, i) => <span key={i} className="flex w-[13.450px] justify-center">{icon}</span>)}
        <div className="ml-[3px] flex w-[33px] flex-col items-center gap-[3px] text-[7px]"><T w={23}>1:15 PM</T><T w={33}>26/03/2020</T></div>
        <div className="relative ml-[9px] size-[14px]">
          <S className="size-[14px]" box="0 0 14 14"><path d="M1 1h9v7H5L3 10V8H1z" fill="#fff" stroke="none" /><path d="M2.500 3.500h6M2.500 5.500h6" stroke="#222" strokeWidth=".8" /><circle cx="9.500" cy="9.500" r="4" fill="#333" stroke="#888" strokeWidth=".8" /></S>
          <span className="absolute left-[6.500px] top-[7px] text-[5px] font-bold">19</span>
        </div>
        <div className="ml-[8px] mr-[2px] h-[22px] w-px bg-[#666]" />
      </div>
    </div>
  );
}

export default function App() {
  return (
    <div className="flex h-[1080px] w-[3840px] overflow-hidden bg-black">
      <section className="flex h-[1080px] w-[1920px] flex-col bg-white">
        <TitleBar />
        <AddressRow />
        <TabStrip />
        <WebPage />
        <LeftTaskbar />
      </section>
      <section className="flex h-[1080px] w-[1920px] flex-col bg-black pt-[138px] font-['Open_Sans',sans-serif] text-[7px] leading-none text-[#e0e0e0]">
        <StudioTitle />
        <Ribbon />
        <div className="flex h-[709px] shrink-0 bg-[#2d2d32] pt-[3px]">
          <div className="flex w-[1602px] shrink-0 flex-col">
            <div className="flex h-[587px] shrink-0">
              <ProjectPanel />
              <Designer />
            </div>
            <Output />
          </div>
          <Properties />
        </div>
        <StatusBar />
        <RightTaskbar />
      </section>
    </div>
  );
}
